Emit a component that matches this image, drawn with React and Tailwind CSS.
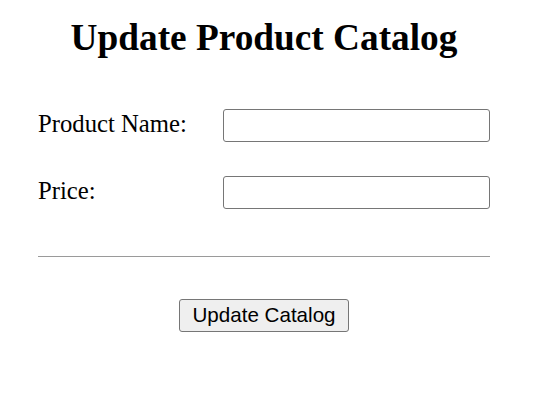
import React from 'react';

const App = () => {
    return (
        <div className="w-[538px] h-[401px] bg-white text-black">
            <div className="ml-[38px] w-[452px] pt-[16px]">
                <h1 className="text-center text-[37.3px] leading-[44px] font-bold font-['Liberation_Serif',serif]">
                    Update Product Catalog
                </h1>

                <div className="mt-[49px] flex flex-col gap-[34px]">
                    <div className="flex items-center">
                        <label className="w-[185px] pb-[4px] text-[24.7px] leading-[29px] font-['Liberation_Serif',serif]">Product Name:</label>
                        <input
                            type="text"
                            className="w-[267px] h-[33px] border border-[#767676] rounded-[3px] bg-white px-2"
                        />
                    </div>
                    <div className="flex items-center">
                        <label className="w-[185px] pb-[4px] text-[24.7px] leading-[29px] font-['Liberation_Serif',serif]">Price:</label>
                        <input
                            type="text"
                            className="w-[267px] h-[33px] border border-[#767676] rounded-[3px] bg-white px-2"
                        />
                    </div>
                </div>

                <hr className="mt-[47px] border-t border-[#9a9a9a]" />

                <div className="mt-[42px] flex justify-center">
                    <button
                        type="button"
                        className="w-[170px] h-[33px] bg-[#efefef] border border-[#767676] rounded-[3px] text-[20.6px] leading-none font-['Liberation_Sans',Arial,sans-serif]"
                    >
                        Update Catalog
                    </button>
                </div>
            </div>
        </div>
    );
};

export default App;
